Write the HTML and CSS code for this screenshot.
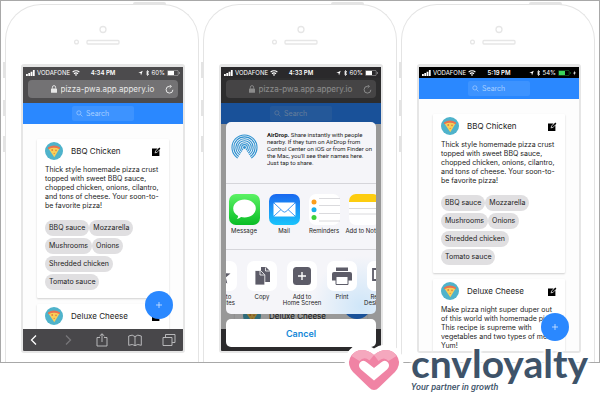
FILE: index.html
```html
<!DOCTYPE html>
<html lang="en">
<head>
<meta charset="utf-8">
<title>Pizza PWA</title>
<link rel="stylesheet" href="styles.css">
</head>
<body>
<svg class="defs" aria-hidden="true">
  <symbol id="signal" viewBox="0 0 9 6"><path d="M0 4h1.8v2H0zM2.3 3h1.8v3H2.3zM4.6 1.8h1.8V6H4.6zM6.9 0h1.8v6H6.9z" fill="currentColor"/></symbol>
  <symbol id="wifi" viewBox="0 0 8 6"><path d="M.6 2.1a5 5 0 0 1 6.8 0M2 3.7a3 3 0 0 1 4 0" fill="none" stroke="currentColor" stroke-width="1.2"/><path d="M4 6 2.8 4.7a1.8 1.8 0 0 1 2.4 0z" fill="currentColor"/></symbol>
  <symbol id="locate" viewBox="0 0 5 6"><path d="M.3 3 4.7.7 3 5.4 2.5 3z" fill="currentColor"/></symbol>
  <symbol id="bluetooth" viewBox="0 0 4 6"><path d="M.6 1.6 3.3 4.2 2 5.5v-5L3.3 1.8.6 4.4" fill="none" stroke="currentColor" stroke-width=".8"/></symbol>
  <symbol id="battery" viewBox="0 0 13 6"><rect x=".4" y=".4" width="10.8" height="5.2" rx="1" fill="none" stroke="currentColor" stroke-width=".6" opacity=".6"/><path d="M12 2v2q.8-.2.8-1T12 2z" fill="currentColor" opacity=".6"/><rect x="1" y="1" width="6" height="4" fill="currentColor"/></symbol>
  <symbol id="lock" viewBox="0 0 6 8"><rect x="0" y="3.4" width="6" height="4.4" rx=".6" fill="currentColor"/><path d="M1.4 3.6V2.2a1.6 1.6 0 0 1 3.2 0v1.4" fill="none" stroke="currentColor" stroke-width=".9"/></symbol>
  <symbol id="reload" viewBox="0 0 9 9"><path d="M7.9 4.8A3.4 3.4 0 1 1 4.6 1.3h1.2" fill="none" stroke="currentColor"/><path d="M4.6 0 6.6 1.4 4.6 3" fill="none" stroke="currentColor" stroke-width=".8"/></symbol>
  <symbol id="magnifier" viewBox="0 0 8 8"><circle cx="3.3" cy="3.3" r="2.4" fill="none" stroke="currentColor" stroke-width=".8"/><path d="m5.1 5.1 2.2 2.2" stroke="currentColor" stroke-width=".8"/></symbol>
  <symbol id="pizza" viewBox="0 0 18 18"><circle cx="9" cy="9" r="9" fill="#4fb3cb"/><path d="M3.3 6.2Q9 3.2 14.7 6.2L9.3 15.2z" fill="#f9cf58"/><path d="M3 5.4Q9 1.8 15 5.4q.5 1.6-.8 1.6Q9 4.6 3.8 7 2.5 7 3 5.4z" fill="#e8734f"/><circle cx="7.2" cy="8" r=".9" fill="#e2803f"/><circle cx="11" cy="8.4" r=".8" fill="#e2803f"/><circle cx="9.2" cy="11.4" r=".6" fill="#e2803f"/></symbol>
  <symbol id="edit" viewBox="0 0 9 9"><path d="M0 1.4h5.6L3 4.2l-.3 2 2-.3L7.4 3.2V9H0z" fill="currentColor"/><path d="M3.4 5.6 3.7 4.2 7.3.6l1.1 1.1-3.6 3.6z" fill="currentColor"/></symbol>
  <symbol id="plus" viewBox="0 0 8 8"><path d="M4 1v6M1 4h6" stroke="currentColor" stroke-width=".8"/></symbol>
  <symbol id="chevron" viewBox="0 0 14 14"><path d="M9 2.500 4.500 7 9 11.500" fill="none" stroke="currentColor" stroke-width="1.3"/></symbol>
  <symbol id="share" viewBox="0 0 14 14"><path d="M5 4.500H2v8.500h10V4.500H9M7 9V.8M4.600 3 7 .8 9.400 3" fill="none" stroke="currentColor" stroke-width=".9"/></symbol>
  <symbol id="book" viewBox="0 0 14 14"><path d="M7 3.600v9Q4.500 10.600.7 12.300V3Q4.500 1 7 3.600 9.500 1 13.300 3v9.300Q9.500 10.600 7 12.600" fill="none" stroke="currentColor" stroke-width=".9"/></symbol>
  <symbol id="tabs" viewBox="0 0 14 14"><path d="M1 4.500h9V12.500H1zM3.500 4.300V1.500h9.500v8h-2.800" fill="none" stroke="currentColor" stroke-width=".9"/></symbol>
  <symbol id="hardware" viewBox="0 0 192 59"><g fill="none" stroke="#e6e6e6" stroke-width="1.3"><circle cx="97" cy="24.500" r="3"/><circle cx="70.500" cy="37" r="1.900"/><rect x="81" y="35.500" width="32" height="3.500" rx="1"/></g></symbol>
</svg>

<main class="frame">
  <section class="phone" aria-label="Browser view">
    <svg class="hardware"><use href="#hardware"/></svg>
    <div class="screen">
      <div class="status">
        <span class="carrier"><svg class="i-signal"><use href="#signal"/></svg>VODAFONE<svg class="i-wifi"><use href="#wifi"/></svg></span>
        <time>4:34 PM</time>
        <span class="power"><svg class="i-small"><use href="#locate"/></svg><svg class="i-small"><use href="#bluetooth"/></svg>60%<svg class="i-battery"><use href="#battery"/></svg></span>
      </div>
      <div class="address">
        <div class="field">
          <label class="url"><svg class="i-lock"><use href="#lock"/></svg><input type="text" aria-label="Address" value="pizza-pwa.app.appery.io"></label>
          <button class="reload" aria-label="Reload"><svg><use href="#reload"/></svg></button>
        </div>
      </div>
      <div class="page">
        <header><label class="search"><svg><use href="#magnifier"/></svg><input type="search" aria-label="Search" placeholder="Search"></label></header>
        <div class="cards">
          <article class="card">
            <div class="card-head"><svg class="i-pizza"><use href="#pizza"/></svg><h2>BBQ Chicken</h2><button class="edit" aria-label="Edit"><svg><use href="#edit"/></svg></button></div>
            <p>Thick style homemade pizza crust<br>topped with sweet BBQ sauce,<br>chopped chicken, onions, cilantro,<br>and tons of cheese. Your soon-to-<br>be favorite pizza!</p>
            <ul class="chips"><li>BBQ sauce</li><li>Mozzarella</li><li>Mushrooms</li><li>Onions</li><li>Shredded chicken</li><li>Tomato sauce</li></ul>
          </article>
          <article class="card">
            <div class="card-head"><svg class="i-pizza"><use href="#pizza"/></svg><h2>Deluxe Cheese</h2><button class="edit" aria-label="Edit"><svg><use href="#edit"/></svg></button></div>
          </article>
        </div>
        <button class="fab" aria-label="Add"><svg><use href="#plus"/></svg></button>
      </div>
      <nav class="toolbar">
        <button aria-label="Back"><svg><use href="#chevron"/></svg></button>
        <button aria-label="Forward" class="forward"><svg><use href="#chevron"/></svg></button>
        <button aria-label="Share"><svg><use href="#share"/></svg></button>
        <button aria-label="Bookmarks"><svg><use href="#book"/></svg></button>
        <button aria-label="Tabs"><svg><use href="#tabs"/></svg></button>
      </nav>
    </div>
  </section>

  <section class="phone" aria-label="Share menu">
    <svg class="hardware"><use href="#hardware"/></svg>
    <div class="screen">
      <div class="status status-dim">
        <span class="carrier"><svg class="i-signal"><use href="#signal"/></svg>VODAFONE<svg class="i-wifi"><use href="#wifi"/></svg></span>
        <time>4:33 PM</time>
        <span class="power"><svg class="i-small"><use href="#locate"/></svg><svg class="i-small"><use href="#bluetooth"/></svg>60%<svg class="i-battery"><use href="#battery"/></svg></span>
      </div>
      <div class="address">
        <div class="field">
          <label class="url"><svg class="i-lock"><use href="#lock"/></svg><input type="text" aria-label="Address" value="pizza-pwa.app.appery.io"></label>
          <button class="reload" aria-label="Reload"><svg><use href="#reload"/></svg></button>
        </div>
      </div>
      <div class="page">
        <header><label class="search"><svg><use href="#magnifier"/></svg><input type="search" aria-label="Search" placeholder="Search"></label></header>
        <div class="cards">
          <article class="card card-blank"></article>
          <article class="card">
            <div class="card-head"><svg class="i-pizza"><use href="#pizza"/></svg><h2>Deluxe Cheese</h2></div>
          </article>
        </div>
        <button class="fab" aria-label="Add"><svg><use href="#plus"/></svg></button>
      </div>
      <nav class="toolbar"></nav>
      <div class="overlay">
        <div class="sheet">
          <div class="airdrop">
            <svg class="i-airdrop" viewBox="0 0 28 28"><g fill="none" stroke="#2f92d0" stroke-width="1.1"><circle cx="14" cy="14" r="13"/><circle cx="14" cy="14" r="11"/><circle cx="14" cy="14" r="9"/><circle cx="14" cy="14" r="7"/><circle cx="14" cy="14" r="5"/><circle cx="14" cy="14" r="3"/></g><path d="m14 14-9 14h18z" fill="#f5f5f9"/><circle cx="14" cy="14" r="1.500" fill="#2f92d0"/></svg>
            <p><b>AirDrop.</b> Share instantly with people<br>nearby. If they turn on AirDrop from<br>Control Center on iOS or from Finder on<br>the Mac, you'll see their names here.<br>Just tap to share.</p>
          </div>
          <div class="apps">
            <button><svg viewBox="0 0 31 31"><defs><linearGradient id="g" x2="0" y2="1"><stop stop-color="#5cf264"/><stop offset="1" stop-color="#08bd25"/></linearGradient></defs><rect width="31" height="31" rx="7" fill="url(#g)"/><path d="M15.500 5.500c6.300 0 11.300 4 11.300 9s-5 9-11.300 9q-1.800 0-3.400-.4-1.700 1.700-4.400 2 1.300-1.200 1.500-3.200Q4.200 19.400 4.200 14.500c0-5 5-9 11.300-9z" fill="#fff"/></svg>Message</button>
            <button><svg viewBox="0 0 31 31"><defs><linearGradient id="b" x2="0" y2="1"><stop stop-color="#1a68f0"/><stop offset="1" stop-color="#19c4fb"/></linearGradient></defs><rect width="31" height="31" rx="7" fill="url(#b)"/><rect x="4.500" y="8.500" width="22" height="14" rx="1.500" fill="#fff"/><path d="m5 9 9 8.500q1.500 1.300 3 0L26 9M5 22l7-6.500M26 22l-7-6.500" fill="none" stroke="#2a8ff0" stroke-width=".9"/></svg>Mail</button>
            <button><svg viewBox="0 0 31 31"><rect width="31" height="31" rx="7" fill="#fff"/><path d="M10 4.500h21M10 11.500h21M10 19.500h21M10 27h21" stroke="#d0d0d4" stroke-width=".8"/><circle cx="5" cy="8" r="2.500" fill="#fb9d1b"/><circle cx="5" cy="15.700" r="2.500" fill="#1aaeea"/><circle cx="5" cy="23.500" r="2.500" fill="#3bd13b"/></svg>Reminders</button>
            <button><svg viewBox="0 0 31 31"><rect width="31" height="31" rx="7" fill="#fff"/><path d="M0 8V7a7 7 0 0 1 7-7h17a7 7 0 0 1 7 7v1z" fill="#fdcd10"/><path d="M0 14.500h31M0 20h31" stroke="#d0d0d4" stroke-width=".8"/></svg>Add to Notes</button>
          </div>
          <div class="actions">
            <button><svg viewBox="0 0 30 30"><path d="m15 6 2.500 6 6 .5-4.700 4 1.500 6-5.300-3.300-5.300 3.300 1.500-6-4.700-4 6-.5z" fill="#5d5c68"/></svg>Add to<br>Favorites</button>
            <button><svg viewBox="0 0 30 30"><path d="M14 6h5l4 4v11h-9z" fill="#5d5c68"/><path d="M8 9.500h5.500l4.300 4.300V24H8z" fill="#5d5c68" stroke="#fff" stroke-width=".8"/><path d="M13 10v4h4.500M18.500 6.500V10H23" fill="none" stroke="#fff" stroke-width=".8"/></svg>Copy</button>
            <button><svg viewBox="0 0 30 30"><rect x="6" y="6" width="18" height="18" rx="3.500" fill="#5d5c68"/><path d="M15 11v8M11 15h8" stroke="#fff" stroke-width="1.4"/></svg>Add to<br>Home Screen</button>
            <button><svg viewBox="0 0 30 30"><path d="M9 6.500h12V10H9z" fill="#5d5c68"/><path d="M7 11h16q2 0 2 2v6.500H5V13q0-2 2-2z" fill="#5d5c68"/><path d="M9 15.500h12v8H9z" fill="#fff" stroke="#5d5c68"/></svg>Print</button>
            <button><svg viewBox="0 0 30 30"><path d="M6 8h18v11H6zM11 22.500h8" fill="none" stroke="#5d5c68" stroke-width="1.8"/></svg>Request<br>Desktop Site</button>
          </div>
        </div>
        <button class="cancel">Cancel</button>
      </div>
    </div>
  </section>

  <section class="phone" aria-label="Installed app">
    <svg class="hardware"><use href="#hardware"/></svg>
    <div class="screen">
      <div class="status status-black">
        <span class="carrier"><svg class="i-signal"><use href="#signal"/></svg>VODAFONE<svg class="i-wifi"><use href="#wifi"/></svg></span>
        <time>5:19 PM</time>
        <span class="power"><svg class="i-small"><use href="#locate"/></svg><svg class="i-small"><use href="#bluetooth"/></svg>54%<svg class="i-battery charging"><use href="#battery"/></svg><svg class="i-bolt" viewBox="0 0 3 6"><path d="M2 .5.2 3.400h1.200L1 5.600l1.800-3H1.600z" fill="#fff"/></svg></span>
      </div>
      <div class="page">
        <header><label class="search"><svg><use href="#magnifier"/></svg><input type="search" aria-label="Search" placeholder="Search"></label></header>
        <div class="cards">
          <article class="card">
            <div class="card-head"><svg class="i-pizza"><use href="#pizza"/></svg><h2>BBQ Chicken</h2><button class="edit" aria-label="Edit"><svg><use href="#edit"/></svg></button></div>
            <p>Thick style homemade pizza crust<br>topped with sweet BBQ sauce,<br>chopped chicken, onions, cilantro,<br>and tons of cheese. Your soon-to-<br>be favorite pizza!</p>
            <ul class="chips"><li>BBQ sauce</li><li>Mozzarella</li><li>Mushrooms</li><li>Onions</li><li>Shredded chicken</li><li>Tomato sauce</li></ul>
          </article>
          <article class="card">
            <div class="card-head"><svg class="i-pizza"><use href="#pizza"/></svg><h2>Deluxe Cheese</h2><button class="edit" aria-label="Edit"><svg><use href="#edit"/></svg></button></div>
            <p>Make pizza night super duper out<br>of this world with homemade pizza.<br>This recipe is supreme with<br>vegetables and two types of meats.<br>Yum!</p>
          </article>
        </div>
        <button class="fab" aria-label="Add"><svg><use href="#plus"/></svg></button>
      </div>
    </div>
  </section>
</main>

<div class="brand">
  <svg class="heart" viewBox="0 0 60 50"><path d="M30 45Q27 45 24 42L9 27Q3 20 6 13 10 5 18 5 24 5 30 10 36 5 42 5 50 5 54 13 57 20 51 27L36 42Q33 45 30 45z" fill="#fff" stroke="#fff" stroke-width="9"/><path d="M30 46Q27.500 46 25 43.500L9 28Q3 21 6 14 10 6 18 6 24 6 30 11 36 6 42 6 50 6 54 14 57 21 51 28L35 43.500Q32.500 46 30 46z" fill="#f083a4"/><path d="M7.500 12Q11 6 18 6 24 6 30 11l-4.500 5.500Q20 12 15.500 17zM52.500 12Q49 6 42 6 36 6 30 11l4.500 6Q40 12 44.500 17z" fill="#f5a8be"/><path d="M16 18.500q3-3.500 7 0l7 5.500 7-5.500q4-3.500 7 0 2.500 3.500-1 7L30 36.500 17 25.500q-3.500-3.500-1-7z" fill="#fff"/></svg>
  <div class="brand-text"><strong>cnvloyalty</strong><em>Your partner in growth</em></div>
</div>
</body>
</html>
```
FILE: styles.css
```css
* { box-sizing: border-box; }
body { margin: 0; min-height: 100vh; background: #fff; color: #222; font-family: Inter, "Liberation Sans", sans-serif; font-size: 7px; position: relative; }
.defs { display: none; }
svg { display: block; flex: none; }
button { font: inherit; color: inherit; border: 0; padding: 0; background: none; }
input { font: inherit; color: inherit; border: 0; padding: 0; background: none; outline: 0; min-width: 0; appearance: none; }

.frame { display: grid; grid-template-columns: repeat(3, minmax(0, 1fr)); gap: 4px; padding: 3px 4px 0; border: 1px solid #a8a8a8; overflow: hidden; }
.phone { position: relative; border: 1px solid #e4e4e4; border-bottom: 0; border-radius: 36px 36px 0 0; padding: 0 13px 9px 15px; }
.phone::before { content: ""; position: absolute; top: -3px; left: 66%; width: 33px; height: 3px; background: #e4e4e4; border-radius: 2px 2px 0 0; }
.phone::after { content: ""; position: absolute; top: 57px; left: -3px; width: 2px; height: 16px; background: #e4e4e4; box-shadow: 0 38px #e4e4e4, 0 74px #e4e4e4; }
.hardware { width: 192px; height: 59px; margin-left: -15px; }
.screen { position: relative; display: flex; flex-direction: column; aspect-ratio: 164 / 289; border: 2px solid #e6e6e6; border-top-width: 3px; border-radius: 3px; overflow: hidden; background: #fff; }

.status { display: grid; grid-template-columns: 1fr auto 1fr; align-items: center; height: 11px; flex: none; padding: 0 3px; background: #4c4b4d; color: #fff; font-size: 6px; line-height: 8px; }
.status time { font-weight: 600; }
.status-dim { background: #2a292b; position: relative; z-index: 2; }
.status-black { background: #000; }
.carrier, .power { display: flex; align-items: center; gap: 2px; }
.power { justify-content: flex-end; }
.i-signal { width: 9px; height: 6px; }
.i-wifi { width: 8px; height: 6px; }
.i-small { width: 5px; height: 6px; }
.i-battery { width: 13px; height: 6px; }
.i-bolt { width: 3px; height: 6px; }
.charging { color: #3bd65c; }

.address { flex: none; padding: 2px 5px 5px; background: #4c4b4d; }
.field { display: flex; align-items: center; height: 18px; padding: 0 4px; border-radius: 4px; background: #737274; color: #e8e8e8; }
.url { flex: 1; display: flex; justify-content: center; align-items: center; gap: 4px; padding-left: 8px; font-size: 8px; }
.url input { width: 94px; height: 12px; }
.i-lock { width: 6px; height: 8px; }
.reload svg { width: 9px; height: 9px; }

.page { position: relative; flex: 1; min-height: 0; overflow: hidden; background: #fdfdfd; }
header { display: flex; justify-content: center; padding: 3px 0; background: #2a88ff; }
.search { display: flex; align-items: center; gap: 3px; width: 62px; height: 15px; padding: 0 4px; border-radius: 2px; background: #3d93ff; color: #a8cfff; font-size: 7px; }
.search svg { width: 7px; height: 7px; }
.search input { flex: 1; width: 0; }
.search input::placeholder { color: #a8cfff; opacity: 1; }

.cards { display: flex; flex-direction: column; gap: 6px; padding: 15px 14px; }
.card { padding: 3px 8px 8px; background: #fff; border-radius: 1px; box-shadow: 0 1px 2px rgba(0, 0, 0, .18); }
.card-blank { height: 159px; flex: none; }
.card-head { display: flex; align-items: center; gap: 8px; height: 18px; }
.i-pizza { width: 18px; height: 18px; }
h2 { flex: 1; margin: 0; font-size: 8px; line-height: 12px; font-weight: 400; white-space: nowrap; }
.edit svg { width: 9px; height: 9px; color: #000; }
.card p { margin: 5px -8px 10px 0; line-height: 9px; white-space: nowrap; }
.chips { display: flex; flex-wrap: wrap; gap: 2px 0; margin: 0; padding: 0 16px 0 0; list-style: none; }
.chips li { padding: 0 4px; border-radius: 8px; background: #e0dfe1; line-height: 16px; }
.fab { position: absolute; right: 10px; bottom: 10px; width: 28px; height: 28px; border-radius: 50%; background: #2a88ff; color: #d5e7ff; display: grid; place-items: center; }
.fab svg { width: 8px; height: 8px; }
.toolbar { display: flex; justify-content: space-between; align-items: center; flex: none; height: 22px; padding: 0 7px 0 4px; background: #48474a; color: #c4c4c6; }
.toolbar svg { width: 14px; height: 14px; }
.toolbar button:first-child { color: #fff; }
.toolbar .forward { color: #77767a; transform: scaleX(-1); }

.overlay { position: absolute; inset: 0; z-index: 1; display: flex; flex-direction: column; justify-content: flex-end; gap: 5px; padding: 4px 5px; background: rgba(0, 0, 0, .4); }
.sheet { overflow: hidden; border-radius: 5px; background: radial-gradient(circle at 90% 96%, #cfe6f9, #f5f5f9 22%); }
.airdrop { display: flex; gap: 9px; padding: 9px 0 0 5px; height: 62px; border-bottom: 1px solid #d5d5da; font-family: Roboto, sans-serif; font-size: 6px; }
.i-airdrop { width: 27px; height: 27px; margin-top: 3px; }
.airdrop p { margin: 0; line-height: 7px; white-space: nowrap; }
.apps, .actions { display: flex; }
.apps { height: 66px; padding-top: 10px; border-bottom: 1px solid #d5d5da; margin-left: -2px; }
.apps button, .actions button { display: flex; flex-direction: column; align-items: center; flex: none; width: 40px; font-size: 6px; line-height: 6px; white-space: nowrap; }
.apps svg { width: 31px; height: 31px; margin-bottom: 3px; }
.actions { height: 64px; padding-top: 11px; margin-left: -24px; }
.actions svg { width: 30px; height: 30px; margin-bottom: 3px; border-radius: 7px; background: #fff; }
.cancel { flex: none; height: 28px; border-radius: 5px; background: #fff; color: #1388d8; font-size: 9px; font-weight: 600; }

.brand { position: absolute; z-index: 3; left: 344px; top: 344px; display: flex; gap: 7px; }
.heart { width: 60px; height: 50px; overflow: visible; }
.brand-text { display: flex; flex-direction: column; color: #3e5369; text-shadow: 0 0 3px #fff, 0 0 3px #fff, 0 0 3px #fff, 0 0 4px #fff, 0 0 4px #fff, 0 0 4px #fff, 0 0 4px #fff; }
.brand strong { font: 700 39px/38px Lato, sans-serif; }
.brand em { font: italic 500 9px/10px Roboto, sans-serif; }
```
